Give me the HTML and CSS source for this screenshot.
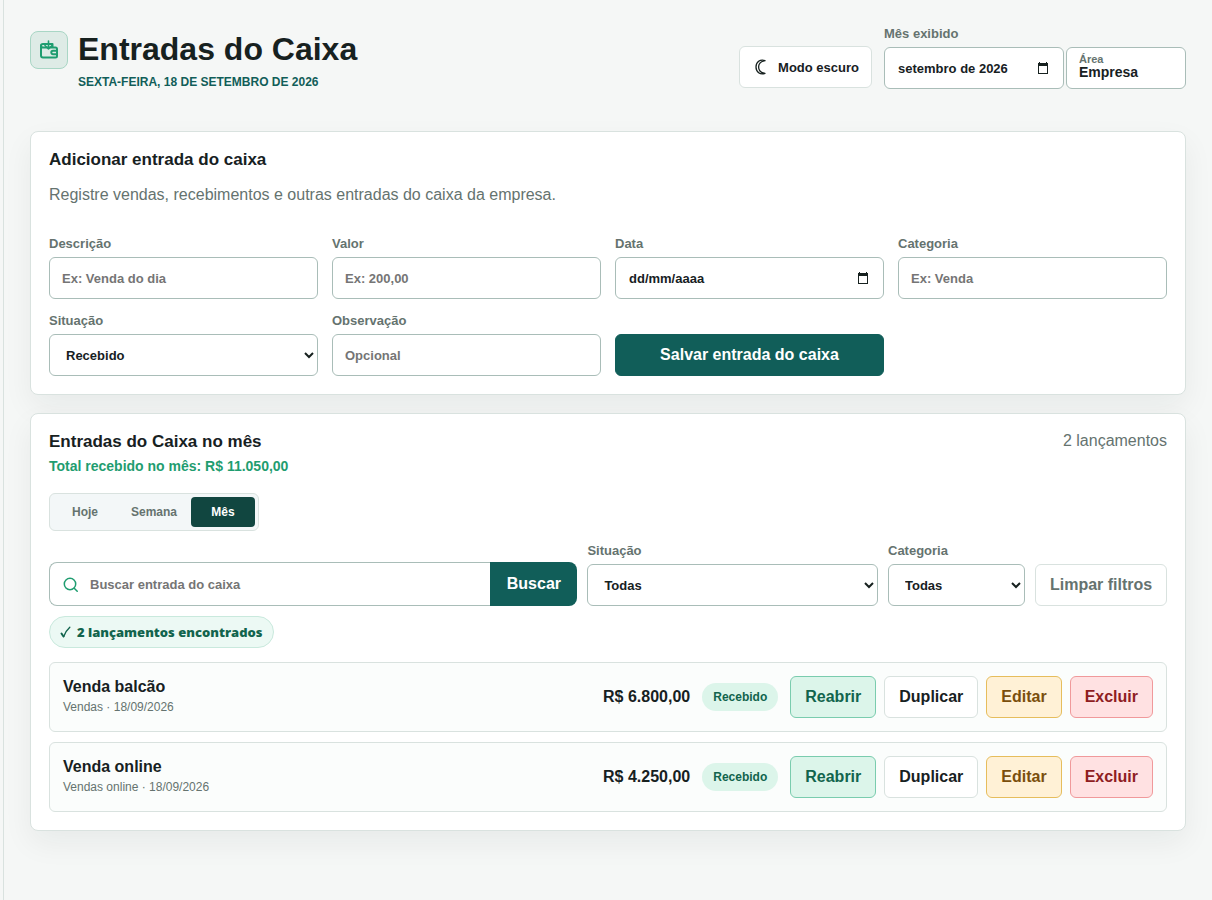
FILE: index.html
```html
<!DOCTYPE html>
<html lang="pt-BR">
<head>
    <meta charset="UTF-8">
    <meta name="viewport" content="width=device-width, initial-scale=1.0">
    <title>Entradas do Caixa</title>
    <link rel="stylesheet" href="styles.css">
</head>
<body>
    <main class="page">
        <header class="topbar">
            <div class="title-block">
                <span class="title-icon">
                    <svg width="20" height="20" viewBox="0 0 20 20" fill="none" stroke="currentColor" stroke-linecap="round" stroke-linejoin="round" aria-hidden="true">
                        <path stroke-width="2" d="M2 5v10.500Q2 17.500 4 17.500h12.500q1.500 0 1.500-1.500V9q0-1.500-1.500-1.500H4Q2 7.500 2 5.700 2 4 4 4h9.500v3"/>
                        <path stroke-width="2" d="M18 10.800h-4a1.700 1.700 0 0 0 0 3.400h4"/>
                        <path stroke-width="1.600" d="M9.500 1v8M6 5.500l3.500 3.500L13 5.500"/>
                    </svg>
                </span>
                <div>
                    <h1>Entradas do Caixa</h1>
                    <p class="today">Sexta-feira, 18 de setembro de 2026</p>
                </div>
            </div>
            <div class="top-actions">
                <button type="button" class="btn theme-toggle">
                    <svg width="14" height="16" viewBox="0 0 14 16" fill="none" stroke="currentColor" stroke-width="1.300" stroke-linejoin="round" aria-hidden="true">
                        <path d="M11 1.600C6-.2 2 3.200 2 8s4 8.200 9 6.400C7.500 13.800 4.600 11.500 4.600 8S7.500 2.200 11 1.600z"/>
                    </svg>
                    Modo escuro
                </button>
                <div class="field month-field">
                    <label for="month">Mês exibido</label>
                    <div class="date-box">
                        <input type="text" id="month" value="setembro de 2026">
                        <button type="button" class="calendar-button" aria-label="Abrir calendário">
                            <svg width="12" height="12" viewBox="0 0 12 12" aria-hidden="true"><path fill="currentColor" d="M2 0h1v1h6V0h1v1h1v11H1V1h1zM2 4v7h8V4z"/></svg>
                        </button>
                    </div>
                </div>
                <div class="area-box">
                    <span>Área</span>
                    <strong>Empresa</strong>
                </div>
            </div>
        </header>

        <section class="card">
            <h2>Adicionar entrada do caixa</h2>
            <p class="intro">Registre vendas, recebimentos e outras entradas do caixa da empresa.</p>
            <form class="entry-form">
                <div class="field">
                    <label for="description">Descrição</label>
                    <input type="text" id="description" class="control" placeholder="Ex: Venda do dia">
                </div>
                <div class="field">
                    <label for="amount">Valor</label>
                    <input type="text" id="amount" class="control" placeholder="Ex: 200,00">
                </div>
                <div class="field">
                    <label for="date">Data</label>
                    <div class="date-box">
                        <input type="text" id="date" placeholder="dd/mm/aaaa">
                        <button type="button" class="calendar-button" aria-label="Abrir calendário">
                            <svg width="12" height="12" viewBox="0 0 12 12" aria-hidden="true"><path fill="currentColor" d="M2 0h1v1h6V0h1v1h1v11H1V1h1zM2 4v7h8V4z"/></svg>
                        </button>
                    </div>
                </div>
                <div class="field">
                    <label for="category">Categoria</label>
                    <input type="text" id="category" class="control" placeholder="Ex: Venda">
                </div>
                <div class="field">
                    <label for="status">Situação</label>
                    <select id="status" class="control">
                        <option>Recebido</option>
                        <option>Pendente</option>
                    </select>
                </div>
                <div class="field">
                    <label for="note">Observação</label>
                    <input type="text" id="note" class="control" placeholder="Opcional">
                </div>
                <button type="submit" class="btn btn-primary">Salvar entrada do caixa</button>
            </form>
        </section>

        <section class="card">
            <div class="list-header">
                <div>
                    <h2>Entradas do Caixa no mês</h2>
                    <p class="total">Total recebido no mês: R$ 11.050,00</p>
                </div>
                <span class="count">2 lançamentos</span>
            </div>
            <div class="period">
                <button type="button">Hoje</button>
                <button type="button">Semana</button>
                <button type="button" class="active">Mês</button>
            </div>
            <form class="filters">
                <div class="search">
                    <div class="search-box">
                        <svg width="16" height="16" viewBox="0 0 16 16" fill="none" stroke="currentColor" stroke-width="1.500" stroke-linecap="round" aria-hidden="true">
                            <circle cx="7" cy="8" r="5.700"/>
                            <path d="M11.200 12.200 14.200 15.200"/>
                        </svg>
                        <input type="search" aria-label="Buscar entrada do caixa" placeholder="Buscar entrada do caixa">
                    </div>
                    <button type="submit">Buscar</button>
                </div>
                <div class="field">
                    <label for="filterStatus">Situação</label>
                    <select id="filterStatus" class="control">
                        <option>Todas</option>
                    </select>
                </div>
                <div class="field">
                    <label for="filterCategory">Categoria</label>
                    <select id="filterCategory" class="control">
                        <option>Todas</option>
                    </select>
                </div>
                <button type="reset" class="btn btn-clear">Limpar filtros</button>
            </form>
            <p class="found">
                <svg width="11" height="12" viewBox="0 0 11 12" fill="none" stroke="currentColor" stroke-linecap="round" stroke-linejoin="round" aria-hidden="true"><path stroke-width="2" d="M1.500 7.500 3.500 10.500"/><path stroke-width="1.400" d="M3.700 10.500Q6 4.500 9.800 1.200"/></svg>
                2 lançamentos encontrados
            </p>
            <ul class="entries">
                <li class="entry">
                    <div class="entry-info">
                        <strong>Venda balcão</strong>
                        <small>Vendas · 18/09/2026</small>
                    </div>
                    <strong class="value">R$ 6.800,00</strong>
                    <span class="badge">Recebido</span>
                    <div class="entry-actions">
                        <button type="button" class="btn btn-reopen">Reabrir</button>
                        <button type="button" class="btn">Duplicar</button>
                        <button type="button" class="btn btn-edit">Editar</button>
                        <button type="button" class="btn btn-delete">Excluir</button>
                    </div>
                </li>
                <li class="entry">
                    <div class="entry-info">
                        <strong>Venda online</strong>
                        <small>Vendas online · 18/09/2026</small>
                    </div>
                    <strong class="value">R$ 4.250,00</strong>
                    <span class="badge">Recebido</span>
                    <div class="entry-actions">
                        <button type="button" class="btn btn-reopen">Reabrir</button>
                        <button type="button" class="btn">Duplicar</button>
                        <button type="button" class="btn btn-edit">Editar</button>
                        <button type="button" class="btn btn-delete">Excluir</button>
                    </div>
                </li>
            </ul>
        </section>
    </main>
</body>
</html>
```
FILE: styles.css
```css
* {
  box-sizing: border-box;
}

body {
  margin: 0;
  padding-left: 3px;
  min-height: 100vh;
  display: flex;
  font-family: "Liberation Sans", Arial, sans-serif;
  font-size: 16px;
  color: #17211f;
  background-color: #f5f7f6;
}

h1, h2, p, ul {
  margin: 0;
}

button, input, select {
  font-family: inherit;
  font-weight: bold;
  color: inherit;
}

.page {
  flex: 1;
  min-width: 0;
  padding: 26px;
  border-left: 1px solid #d9e2df;
}

/* Header */
.topbar {
  display: flex;
  justify-content: space-between;
  align-items: flex-start;
  margin-bottom: 42px;
}

.title-block {
  display: flex;
  gap: 10px;
  padding-top: 5px;
}

.title-icon {
  display: flex;
  align-items: center;
  justify-content: center;
  width: 38px;
  height: 38px;
  border: 1px solid #a9d6c5;
  border-radius: 8px;
  background-color: #deebe6;
  color: #1f9d70;
}

h1 {
  font-size: 32px;
  line-height: 36px;
}

.today {
  margin-top: 8px;
  font-size: 12px;
  line-height: 14px;
  font-weight: bold;
  text-transform: uppercase;
  color: #115e59;
}

.top-actions {
  display: flex;
  align-items: flex-end;
}

.month-field {
  width: 180px;
  margin-right: 2px;
}

.area-box {
  width: 120px;
  height: 42px;
  padding: 5px 12px;
  border: 1px solid #a9bdb8;
  border-radius: 6px;
  background-color: #fff;
}

.area-box span,
.area-box strong {
  display: block;
  font-size: 11px;
  line-height: 13px;
  font-weight: bold;
  color: #65736f;
}

.area-box strong {
  font-size: 14px;
  color: #17211f;
}

/* Form controls */
.field {
  display: flex;
  flex-direction: column;
  gap: 6px;
  min-width: 0;
}

.field label {
  font-size: 13px;
  line-height: 15px;
  font-weight: bold;
  color: #65736f;
}

.control,
.date-box {
  width: 100%;
  height: 42px;
  padding: 0 12px;
  border: 1px solid #a9bdb8;
  border-radius: 6px;
  background-color: #fff;
  font-size: 13px;
}

select.control {
  padding: 0 0 0 12px;
}

.control::placeholder,
.search input::placeholder {
  color: #757575;
}

.date-box {
  display: flex;
  align-items: center;
  padding: 0 14px 0 13px;
}

.date-box input {
  flex: 1;
  min-width: 0;
  padding: 0;
  border: none;
  outline: none;
  background: none;
  font-size: 13px;
}

.date-box input::placeholder {
  color: #17211f;
}

.calendar-button {
  display: flex;
  padding: 0;
  border: none;
  background: none;
  cursor: pointer;
}

.btn {
  height: 42px;
  padding: 0 14px;
  border: 1px solid #d9e2df;
  border-radius: 6px;
  background-color: #fff;
  font-size: 16px;
  white-space: nowrap;
  cursor: pointer;
}

.theme-toggle {
  display: flex;
  align-items: center;
  gap: 10px;
  margin: 0 12px 1px 0;
  padding: 0 12px 0 14px;
  font-size: 13px;
}

.btn-primary {
  border-color: #115e59;
  background-color: #115e59;
  color: #fff;
}

/* Cards */
.card {
  padding: 18px;
  border: 1px solid #d9e2df;
  border-radius: 8px;
  background-color: #fff;
  box-shadow: 0 12px 30px rgba(23, 33, 31, 0.06);
}

.card + .card {
  margin-top: 18px;
}

h2 {
  font-size: 17px;
  line-height: 20px;
}

.intro {
  margin: 15px 0 31px;
  line-height: 20px;
  color: #65736f;
}

.entry-form {
  display: grid;
  grid-template-columns: repeat(4, 1fr);
  gap: 14px;
  align-items: end;
}

/* Entries list */
.list-header {
  display: flex;
  justify-content: space-between;
}

.total {
  margin-top: 6px;
  font-size: 14px;
  line-height: 16px;
  font-weight: bold;
  color: #1f9d70;
}

.count {
  line-height: 18px;
  color: #65736f;
}

.period {
  display: flex;
  width: fit-content;
  margin-top: 19px;
  padding: 3px;
  border: 1px solid #d9e2df;
  border-radius: 6px;
  background-color: #f3f7f8;
}

.period button {
  min-width: 64px;
  height: 30px;
  padding: 0 14px;
  border: none;
  border-radius: 4px;
  background: none;
  font-size: 12px;
  color: #65736f;
  cursor: pointer;
}

.period .active {
  background-color: #114640;
  color: #fff;
}

.filters {
  display: grid;
  grid-template-columns: 20fr 11fr 137px 132px;
  gap: 10px;
  align-items: end;
  margin-top: 12px;
}

.search {
  display: flex;
  height: 44px;
}

.search-box {
  flex: 1;
  min-width: 0;
  display: flex;
  align-items: center;
  padding-left: 13px;
  border: 1px solid #a9bdb8;
  border-right: none;
  border-radius: 8px 0 0 8px;
  color: #1f9d70;
}

.search input {
  flex: 1;
  min-width: 0;
  height: 42px;
  padding: 0 11px;
  border: none;
  outline: none;
  background: none;
  font-size: 13px;
}

.search button {
  width: 87px;
  border: none;
  border-radius: 0 8px 8px 0;
  background-color: #115e59;
  color: #fff;
  font-size: 16px;
  cursor: pointer;
}

.btn-clear {
  color: #65736f;
}

.found {
  display: flex;
  align-items: center;
  gap: 6px;
  width: fit-content;
  height: 32px;
  margin: 10px 0 14px;
  padding: 0 10px;
  border: 1px solid #c9e9dd;
  border-radius: 16px;
  background-color: #ecf9f4;
  font-family: "Open Sans", sans-serif;
  font-size: 13px;
  font-weight: 800;
  color: #12644d;
}

.entries {
  display: grid;
  gap: 10px;
  padding: 0;
  list-style: none;
}

.entry {
  display: flex;
  align-items: center;
  gap: 12px;
  padding: 13px;
  border: 1px solid #d9e2df;
  border-radius: 6px;
  background-color: #fbfdfc;
}

.entry-info {
  flex: 1;
}

.entry-info strong,
.entry-info small {
  display: block;
  line-height: 20px;
}

.entry-info small {
  font-size: 12px;
  color: #65736f;
}

.badge {
  padding: 7px 11px;
  border-radius: 14px;
  background-color: #dcf5ea;
  font-size: 12px;
  line-height: 14px;
  font-weight: bold;
  color: #12644d;
}

.entry-actions {
  display: flex;
  gap: 8px;
}

.btn-reopen {
  border-color: #7accae;
  background-color: #dcf5ea;
  color: #12644d;
}

.btn-edit {
  border-color: #e6bd5c;
  background-color: #fff1d6;
  color: #7a4f0d;
}

.btn-delete {
  border-color: #f0999b;
  background-color: #ffe1e2;
  color: #8f1d22;
}
```
